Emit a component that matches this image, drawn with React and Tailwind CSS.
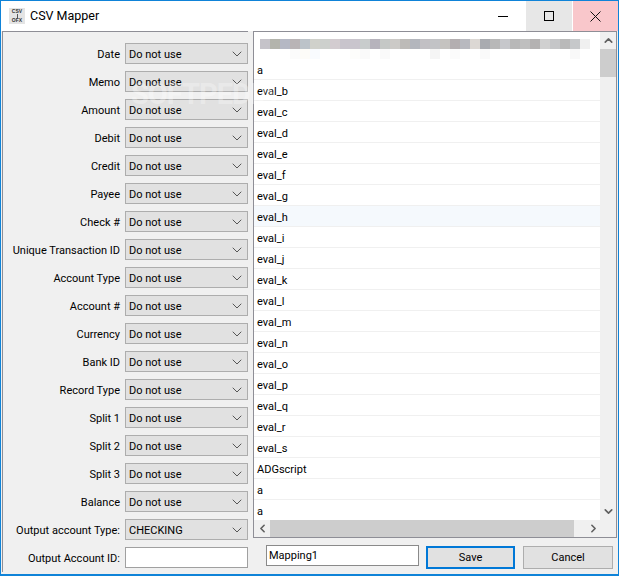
import React from 'react';
import { ChevronDown, ChevronUp, ChevronLeft, ChevronRight } from 'lucide-react';

const fields = ['Date', 'Memo', 'Amount', 'Debit', 'Credit', 'Payee', 'Check #', 'Unique Transaction ID', 'Account Type', 'Account #', 'Currency', 'Bank ID', 'Record Type', 'Split 1', 'Split 2', 'Split 3', 'Balance'];
const rows = ['a', 'eval_b', 'eval_c', 'eval_d', 'eval_e', 'eval_f', 'eval_g', 'eval_h', 'eval_i', 'eval_j', 'eval_k', 'eval_l', 'eval_m', 'eval_n', 'eval_o', 'eval_p', 'eval_q', 'eval_r', 'eval_s', 'ADGscript', 'a', 'a'];
const blur = ['#c5c3c9', '#b3b4ac', '#b5b8c4', '#b9b4b6', '#bcc3c9', '#d0d1cb', '#cdd0cd', '#d3ccd0', '#c8c4cc', '#c9c5cd', '#c8cccc', '#b6b3bc', '#c5c8c6', '#cccac7', '#bdbbb8', '#b3b6bd', '#c2c0c4', '#c2c3c6', '#c5c3c0', '#b3aeb0', '#b8b9bf', '#dcd8d4', '#a9abb0', '#b8b8b8', '#c6c7cb', '#b8b8b8', '#bfbfbf', '#b4b2b2', '#d0d0d0', '#c5c6c8', '#b9b9b9', '#c6c8ca', '#f0f0f0'];
const faint = { 3: '#fbfbfb', 4: '#fdfcf8', 5: '#f9fbfe', 9: '#fdfdfb', 10: '#fafafa', 12: '#fafafa', 17: '#f5f5f5', 19: '#fbfbfb', 22: '#fafafa', 31: '#f9f9f9' };

function Combo({ value }) {
  return (
    <div className="flex h-[21px] w-[123px] shrink-0 items-center justify-between border border-[#adadad] bg-[#e1e1e1] pl-[3px] pr-[2px]">
      <span className="pt-px">{value}</span>
      <ChevronDown size={16} strokeWidth={1.1} className="text-[#222]" />
    </div>
  );
}

function Row({ label, children }) {
  return (
    <div className="flex h-[21px] items-center justify-end gap-[5px]">
      <span className="whitespace-nowrap pt-px">{label}</span>
      {children}
    </div>
  );
}

export default function App() {
  return (
    <div className="relative flex h-[576px] w-[619px] flex-col overflow-hidden border border-b-2 border-[#0f83d8] bg-[#f0f0f0] font-['Roboto',sans-serif] text-[11px] leading-none text-black">
      <div className="flex h-[30px] shrink-0 items-center bg-white pl-[8px]">
        <div className="flex h-[16px] w-[16px] flex-col items-center justify-center bg-[#e4e4e4] font-['Liberation_Sans',sans-serif] text-[5px] font-bold leading-[5px] text-[#333]">
          <span>CSV</span>
          <div className="h-[4px] w-px bg-[#555]" />
          <span>OFX</span>
        </div>
        <span className="ml-[5px] text-[12.5px]">CSV Mapper</span>
        <div className="ml-auto flex h-[30px]">
          <div className="flex w-[46px] items-center justify-center">
            <div className="h-px w-[10px] bg-black" />
          </div>
          <div className="flex w-[46px] items-center justify-center bg-[#e7e7e7]">
            <div className="h-[10px] w-[10px] border border-black" />
          </div>
          <div className="ml-px flex w-[45px] items-center justify-center bg-[#f9c7cb]">
            <svg width="11" height="11" viewBox="0 0 11 11" fill="none" stroke="#111" strokeWidth="1"><path d="M0.5 0.5L10.5 10.5M10.5 0.5L0.5 10.5" /></svg>
          </div>
        </div>
      </div>
      <div className="flex min-h-0 flex-1 pl-px">
        <div className="flex h-[541px] w-[246px] shrink-0 flex-col gap-[7px] border-l border-t border-[#8e8e96] pt-[11px]">
          {fields.map((f) => (
            <Row key={f} label={f}><Combo value="Do not use" /></Row>
          ))}
          <Row label="Output account Type:"><Combo value="CHECKING" /></Row>
          <Row label="Output Account ID:"><div className="h-[21px] w-[123px] shrink-0 border border-[#a0a0a0] bg-white" /></Row>
        </div>
        <div className="ml-[5px] flex w-[364px] flex-col">
          <div className="flex h-[507px] flex-col border border-[#8e8e96] bg-white">
            <div className="flex min-h-0 flex-1">
              <div className="min-w-0 flex-1 overflow-hidden">
                <div className="h-[27px] pl-[6px] pt-[7px]">
                  <div className="flex">
                    {blur.map((c, i) => (
                      <div key={i} className="h-[10px] w-[10px]" style={{ backgroundColor: c }} />
                    ))}
                  </div>
                  <div className="flex">
                    {blur.map((c, i) => (
                      <div key={i} className="h-[10px] w-[10px]" style={{ backgroundColor: faint[i] || '#ffffff' }} />
                    ))}
                  </div>
                </div>
                {rows.map((r, i) => (
                  <div key={i} className={`flex h-[21px] items-center border-b border-[#f0f0f0] pl-[3px] pt-[2px] ${r === 'eval_h' ? 'bg-[#f5f9fd]' : ''}`}>
                    {r}
                  </div>
                ))}
              </div>
              <div className="flex w-[16px] flex-col items-center bg-[#f0f0f0]">
                <ChevronUp size={13} strokeWidth={3} className="mt-[2px] text-[#606060]" />
                <div className="mt-[2px] h-[28px] w-full bg-[#cdcdcd]" />
                <ChevronDown size={13} strokeWidth={3} className="mb-[2px] mt-auto text-[#606060]" />
              </div>
            </div>
            <div className="flex h-[17px] items-center bg-[#f0f0f0]">
              <ChevronLeft size={13} strokeWidth={3} className="ml-[2px] text-[#606060]" />
              <div className="ml-[1px] h-full w-[304px] bg-[#cdcdcd]" />
              <ChevronRight size={13} strokeWidth={3} className="ml-[13px] text-[#606060]" />
            </div>
          </div>
          <div className="flex items-start pl-[13px] pt-[7px]">
            <div className="flex h-[21px] w-[153px] items-center border border-[#8a8a8a] bg-white pl-[2px]">Mapping1</div>
            <div className="ml-[7px] mt-px flex h-[23px] w-[89px] items-center justify-center border-2 border-[#0078d7] bg-[#e1e1e1]">Save</div>
            <div className="ml-[8px] mt-px flex h-[23px] w-[90px] items-center justify-center border border-[#adadad] bg-[#e1e1e1]">Cancel</div>
          </div>
        </div>
      </div>
      <div className="pointer-events-none absolute left-[130px] top-[79px] text-[29px] font-bold tracking-[-1px] text-white/30">SOFTPEDIA</div>
    </div>
  );
}
